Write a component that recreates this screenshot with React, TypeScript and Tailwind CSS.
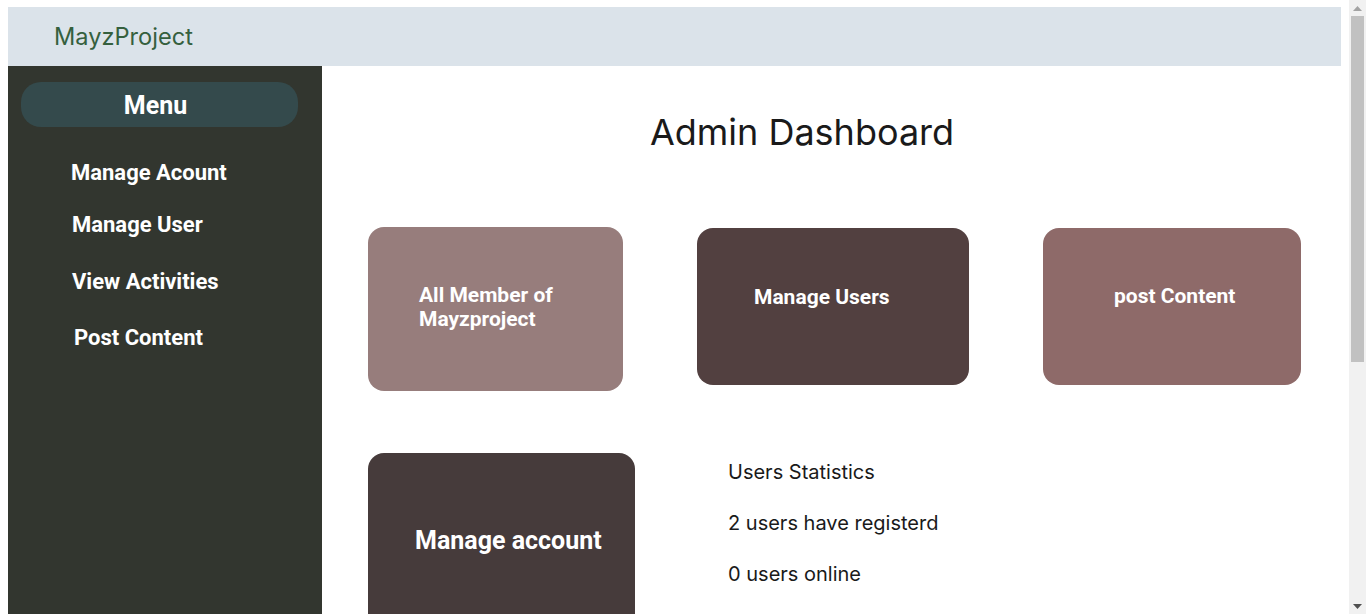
import React from "react";

const inter = { fontFamily: "Inter, 'Noto Sans', sans-serif" } as const;

function Scrollbar() {
  return (
    <div className="w-[17px] h-[614px] shrink-0 bg-[#f1f1f1] flex flex-col items-center">
      <div className="h-4 w-full flex items-center justify-center">
        <svg width="9" height="5" viewBox="0 0 9 5"><path d="M0 5 L4.5 0 L9 5 Z" fill="#a3a3a3" /></svg>
      </div>
      <div className="w-[13px] h-[346px] bg-[#c1c1c1]" />
      <div className="flex-1" />
      <div className="h-4 w-full flex items-center justify-center">
        <svg width="9" height="5" viewBox="0 0 9 5"><path d="M0 0 L9 0 L4.5 5 Z" fill="#505050" /></svg>
      </div>
    </div>
  );
}

export default function App() {
  return (
    <div className="h-[614px] overflow-hidden bg-white flex" style={inter}>
      <div className="flex-1 min-w-0 pl-2 pr-2 pt-[7px] pb-2">
        <header className="h-[59px] bg-[#dbe3ea] flex items-center pl-[46px]">
          <span className="text-[23.6px] text-[#35603e] font-['Inter',sans-serif]">MayzProject</span>
        </header>
        <div className="flex h-[955px]">
          <aside className="w-[314px] shrink-0 bg-[#32362f] pt-4 px-[13px] font-['Roboto',sans-serif] text-white">
            <div className="w-[277px] h-[45px] rounded-[20px] bg-[#344a4c] flex items-center justify-center pr-2 pt-[3px]">
              <span className="text-[25px] font-bold">Menu</span>
            </div>
            <nav className="flex flex-col text-[22px] leading-6 font-bold">
              <span className="mt-[34px] ml-[50px]">Manage Acount</span>
              <span className="mt-[28px] ml-[51px]">Manage User</span>
              <span className="mt-[33px] ml-[51px]">View Activities</span>
              <span className="mt-[32px] ml-[53px]">Post Content</span>
            </nav>
          </aside>
          <main className="flex-1 flex flex-col">
            <h1 className="mt-[46px] text-[36px] leading-10 text-[#1a1a1a] text-center pr-[59px] font-['Inter',sans-serif]">
              Admin Dashboard
            </h1>
            <div className="flex items-start gap-[74px] pl-[46px] mt-[75px] font-['Roboto',sans-serif] text-white font-bold">
              <div className="w-[255px] h-[164px] rounded-[16px] bg-[#977d7c] pl-[51px] pt-[56px] text-[21px] leading-6">
                All Member of
                <br />
                Mayzproject
              </div>
              <div className="w-[272px] h-[157px] mt-px rounded-[16px] bg-[#524040] pl-[57px] pt-[57px] text-[21px] leading-6">
                Manage Users
              </div>
              <div className="w-[258px] h-[157px] mt-px rounded-[16px] bg-[#8e6a69] pl-[71px] pt-[56px] text-[21px] leading-6">
                post Content
              </div>
            </div>
            <div className="flex items-start pl-[46px] mt-[62px]">
              <div className="w-[267px] h-[200px] rounded-[16px] bg-[#463b3b] pl-[47px] pt-[74px] text-[25px] leading-7 text-white font-bold font-['Roboto',sans-serif]">
                Manage account
              </div>
              <div className="ml-[93px] pt-[5px] flex flex-col gap-[23px] text-[20px] leading-7 text-[#1a1a1a] font-['Inter',sans-serif]">
                <span>Users Statistics</span>
                <span>2 users have registerd</span>
                <span>0 users online</span>
              </div>
            </div>
          </main>
        </div>
      </div>
      <Scrollbar />
    </div>
  );
}
